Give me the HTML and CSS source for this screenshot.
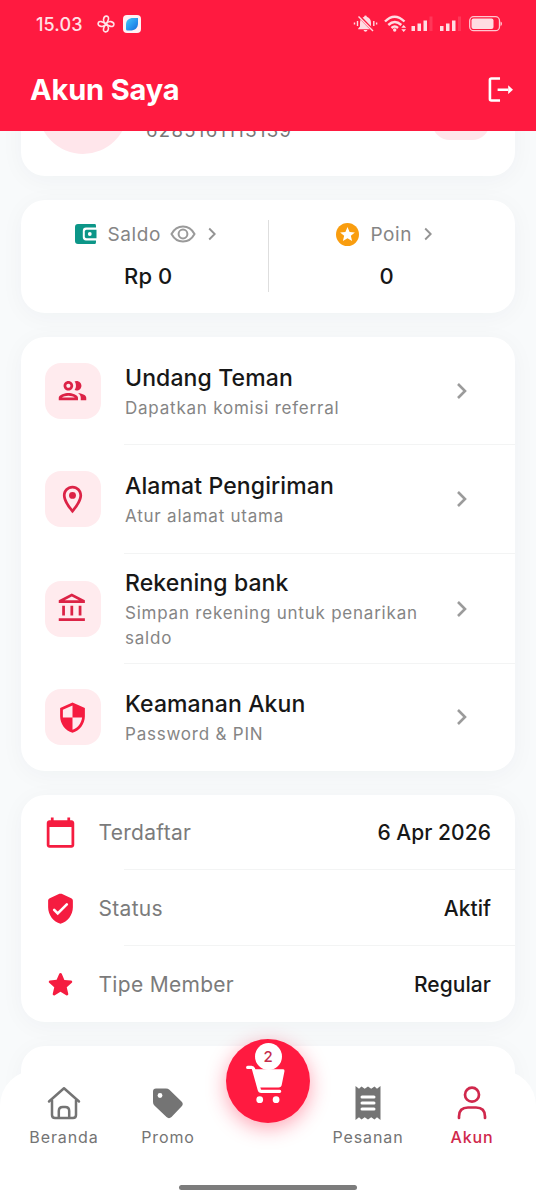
FILE: index.html
```html
<!DOCTYPE html>
<html lang="id">
<head>
<meta charset="utf-8">
<title>Akun Saya</title>
<link rel="stylesheet" href="styles.css">
</head>
<body>
<div class="screen">
  <header class="header">
    <div class="status">
      <span class="clock">15.03</span>
      <svg class="pinwheel" width="18" height="18" viewBox="0 0 18 18"><g fill="none" stroke="#ffe3e8" stroke-width="1.6" transform="rotate(12 9 9)"><path id="petal" d="M9 9C4.500 7.500 4.800 1.500 8 1.200C11.500 1 10.500 6 9 9Z"/><use href="#petal" transform="rotate(90 9 9)"/><use href="#petal" transform="rotate(180 9 9)"/><use href="#petal" transform="rotate(270 9 9)"/></g></svg>
      <svg class="app" width="18" height="18" viewBox="0 0 18 18"><defs><linearGradient id="leaf" x1="0" y1="0" x2="1" y2="1"><stop offset="0" stop-color="#45c8f8"/><stop offset=".5" stop-color="#2a9af0"/><stop offset="1" stop-color="#1769d8"/></linearGradient></defs><rect width="18" height="18" rx="4" fill="#fff1f4"/><path d="M3 10C3 5 6 3 10 3h5v5c0 5-3 7.500-8 7.500H4.500Q3 15.500 3 14Z" fill="url(#leaf)"/></svg>
      <svg class="indicators" width="150" height="20" viewBox="352 14 150 20">
        <g fill="#ffdce2">
          <path d="M365.500 15.500a1.300 1.300 0 0 1 1.300 1.300q4.200 1.300 4.200 6.200v3.500l1.800 2v.8h-14.600v-.8l1.800-2V23q0-4.900 4.200-6.200a1.300 1.300 0 0 1 1.300-1.300ZM363.500 30h4q-.5 1.700-2 1.700t-2-1.700Z"/>
          <path d="m359 16 14.500 15" stroke="#ff1a40" stroke-width="3"/><path d="m358.500 16.500 14.500 14.500" stroke="#ffdce2" stroke-width="1.400"/>
          <path d="M357.500 21v5M354.500 22.500v2M373.800 21v5M376.600 22.500v2" stroke="#ffdce2" stroke-width="1.400"/>
        </g>
        <g fill="none" stroke="#ffdce2" stroke-width="2.400"><path d="M385 21.500q9.500-9.500 19.500 0M388.300 25q6.500-6 13 0M391.500 28q3.300-3 6.500 0"/></g>
        <circle cx="394.700" cy="30" r="1.700" fill="#ffdce2"/><path d="m403.700 25 2.400 2.700h-4.800ZM403.700 32l2.400-2.700h-4.800Z" fill="#ffdce2"/>
        <g fill="#ffdce2"><path d="M411.500 26h3.500v5h-3.500ZM417.500 23.500h3.500V31h-3.500ZM423.500 20.500h3.500V31h-3.500ZM440 26h3.500v5H440ZM446 23.500h3.500V31H446ZM452 20.500h3.500V31H452Z"/><path d="M429.500 16.500h3V31h-3ZM458 16.500h3V31h-3Z" opacity=".15"/></g>
        <rect x="469.700" y="16.700" width="29.800" height="14" rx="4" fill="none" stroke="#ffc7d0" stroke-width="1.300"/><rect x="471.500" y="18.500" width="22" height="10.500" rx="2" fill="#ffdce2"/><path d="M500.500 21.500q1.500.3 1.500 2.200t-1.500 2.200Z" fill="#ffc7d0"/>
      </svg>
    </div>
    <div class="titlebar">
      <h1>Akun Saya</h1>
      <svg width="25" height="25" viewBox="0 0 26 26"><path d="M12.500 1.500h-9q-1.500 0-1.500 1.500v20q0 1.500 1.500 1.500h9M10 13.200h11" fill="none" stroke="#fff" stroke-width="2.700"/><path d="m21 8.600 5 4.600-5 4.600Z" fill="#fff"/></svg>
    </div>
  </header>

  <main class="content">
    <section class="card profile">
      <div class="avatar"></div>
      <div class="phone">6285161113139</div>
      <div class="edit"></div>
    </section>

    <section class="card balance">
      <div class="bal saldo">
        <div class="bal-head">
          <svg width="22" height="20" viewBox="0 0 22 20"><path d="M3 0h17q1 0 1 2v1.600H11Q7.800 3.600 7.800 7v6q0 3.400 3.200 3.400h10v1.600q0 2-1 2H3q-3 0-3-3V3Q0 0 3 0Z" fill="#0c9688"/><path d="M11.500 5.800H21.500v8.400H11.500q-1.700 0-1.700-1.700v-5q0-1.700 1.700-1.700Z" fill="#0c9688"/><circle cx="14.800" cy="10" r="1.900" fill="#fff"/></svg>
          <span>Saldo</span>
          <svg class="eye" width="26" height="18" viewBox="0 0 26 18"><g fill="none" stroke="#9a9a9a" stroke-width="2"><path d="M1.500 9Q5.500 1.500 13 1.500T24.500 9Q20.500 16.500 13 16.500T1.500 9Z"/><circle cx="13" cy="9" r="4.400"/></g></svg>
          <svg class="chev" width="8" height="14" viewBox="0 0 8 14"><path d="m1.200 1.500 5.500 5.500-5.500 5.500" fill="none" stroke="#949494" stroke-width="1.900"/></svg>
        </div>
        <div class="amount">Rp 0</div>
      </div>
      <div class="bal-divider"></div>
      <div class="bal poin">
        <div class="bal-head">
          <svg width="23" height="23" viewBox="0 0 24 24"><circle cx="12" cy="12" r="12" fill="#f99d0f"/><path d="m12 4.300 2.200 5 5.500.5-4.200 3.600 1.300 5.400-4.800-2.900-4.800 2.900 1.300-5.400-4.200-3.600 5.500-.5Z" fill="#fff"/></svg>
          <span>Poin</span>
          <svg class="chev" width="8" height="14" viewBox="0 0 8 14"><path d="m1.200 1.500 5.500 5.500-5.500 5.500" fill="none" stroke="#949494" stroke-width="1.900"/></svg>
        </div>
        <div class="amount">0</div>
      </div>
    </section>

    <section class="card menu">
      <div class="item">
        <div class="tile"><svg viewBox="0 0 24 24"><path d="M9 13.750c-2.340 0-7 1.170-7 3.500V19h14v-1.750c0-2.330-4.660-3.500-7-3.500zM4.340 17c.84-.58 2.870-1.250 4.660-1.250s3.820.67 4.660 1.250H4.340zM9 12c1.930 0 3.500-1.570 3.500-3.500S10.930 5 9 5 5.500 6.570 5.500 8.500 7.070 12 9 12zm0-5c.83 0 1.500.67 1.500 1.500S9.830 10 9 10s-1.500-.67-1.500-1.500S8.170 7 9 7zm7.040 6.810c1.160.84 1.960 1.960 1.960 3.440V19h4v-1.750c0-2.020-3.500-3.170-5.960-3.440zM15 12c1.930 0 3.500-1.570 3.500-3.500S16.930 5 15 5c-.54 0-1.040.13-1.500.35.63.89 1 1.980 1 3.150s-.37 2.260-1 3.150c.46.22.96.35 1.500.35z"/></svg></div>
        <div class="text"><h2>Undang Teman</h2><p>Dapatkan komisi referral</p></div>
        <svg class="go" viewBox="0 0 12 18"><path d="m2 2 7 7-7 7"/></svg>
      </div>
      <div class="item">
        <div class="tile"><svg viewBox="0 0 24 24"><path d="M12 2C8.130 2 5 5.130 5 9c0 5.250 7 13 7 13s7-7.750 7-13c0-3.870-3.130-7-7-7zM7 9c0-2.760 2.240-5 5-5s5 2.240 5 5c0 2.880-2.880 7.190-5 9.880C9.920 16.210 7 11.850 7 9z"/><circle cx="12" cy="9" r="2.500"/></svg></div>
        <div class="text"><h2>Alamat Pengiriman</h2><p>Atur alamat utama</p></div>
        <svg class="go" viewBox="0 0 12 18"><path d="m2 2 7 7-7 7"/></svg>
      </div>
      <div class="item tall">
        <div class="tile"><svg viewBox="0 0 24 24"><path d="M6.500 10h-2v7h2v-7zm6 0h-2v7h2v-7zm8.500 9H2v2h19v-2zm-2.500-9h-2v7h2v-7zm-7-6.740L16.710 6H6.290l5.210-2.740m0-2.260L2 6v2h19V6l-9.500-5z"/></svg></div>
        <div class="text"><h2>Rekening bank</h2><p>Simpan rekening untuk penarikan saldo</p></div>
        <svg class="go" viewBox="0 0 12 18"><path d="m2 2 7 7-7 7"/></svg>
      </div>
      <div class="item">
        <div class="tile bright"><svg viewBox="0 0 24 24"><path fill-rule="evenodd" d="M12 1 3 5v6c0 5.550 3.840 10.740 9 12 5.160-1.260 9-6.450 9-12V5ZM12 3.190V12H5V6.300ZM12 12h7c-.53 4.120-3.280 7.790-7 8.930Z"/></svg></div>
        <div class="text"><h2>Keamanan Akun</h2><p>Password &amp; PIN</p></div>
        <svg class="go" viewBox="0 0 12 18"><path d="m2 2 7 7-7 7"/></svg>
      </div>
    </section>

    <section class="card info">
      <div class="row"><svg width="33" height="33" viewBox="0 0 24 24"><path d="M20 3h-1V1h-2v2H7V1H5v2H4c-1.100 0-2 .9-2 2v16c0 1.100.9 2 2 2h16c1.100 0 2-.9 2-2V5c0-1.100-.9-2-2-2zm0 18H4V8h16v13z"/></svg><span>Terdaftar</span><b>6 Apr 2026</b></div>
      <div class="row"><svg width="33" height="33" viewBox="0 0 24 24"><path d="M11.190 1.360l-7 3.110C3.470 4.790 3 5.510 3 6.300V11c0 5.550 3.840 10.740 9 12 5.160-1.260 9-6.450 9-12V6.300c0-.79-.47-1.510-1.190-1.830l-7-3.110c-.51-.23-1.110-.23-1.620 0z"/><path d="m7.400 13 2.600 2.600 6.600-6.600" fill="none" stroke="#fff" stroke-width="1.900" stroke-linecap="round"/></svg><span>Status</span><b>Aktif</b></div>
      <div class="row"><svg width="33" height="33" viewBox="0 0 24 24"><path d="M12 17.270l4.150 2.510c.76.46 1.690-.22 1.490-1.080l-1.100-4.720 3.670-3.180c.67-.58.31-1.680-.57-1.750l-4.830-.41-1.890-4.460c-.34-.81-1.500-.81-1.840 0L9.190 8.630l-4.830.41c-.88.070-1.240 1.170-.57 1.750l3.670 3.180-1.100 4.720c-.2.86.73 1.540 1.490 1.080l4.150-2.500z"/></svg><span>Tipe Member</span><b>Regular</b></div>
    </section>

    <section class="card next"></section>
  </main>

  <nav class="nav">
    <div class="tab"><svg width="34" height="34" viewBox="0 0 34 34"><g fill="none" stroke="#747474" stroke-width="2.500" stroke-linejoin="round" stroke-linecap="round"><path d="M2 15.500 17 2.300l15 13.200"/><path d="M5 14.500V29q0 3 3 3h18q3 0 3-3V14.500"/><path d="M11.800 31.500V25q0-4 4-4h2.400q4 0 4 4v6.500"/></g></svg><span>Beranda</span></div>
    <div class="tab"><svg width="34" height="34" viewBox="0 0 34 34"><path fill="#747474" d="M5 2.500h10q2 0 3.400 1.300L30.500 15.500q2.500 2.500 0 5L20.500 31q-2.500 2.300-5 0L3.400 19.500Q2 18 2 16V5.500q0-3 3-3Z"/><circle cx="9" cy="9.500" r="2.400" fill="#fff"/></svg><span>Promo</span></div>
    <div class="gap"></div>
    <div class="tab"><svg width="34" height="34" viewBox="0 0 34 34"><path fill="#747474" d="M4.500 0 8 2.800 10.500.5l3.200 2.300L17 .5l3.200 2.300L23.500.5 26 2.800 29.500 0v34L26 31.200l-2.500 2.300-3.300-2.300-3.200 2.300-3.300-2.300-3.200 2.300L8 31.200 4.500 34Z"/><path d="M11 11h12M11 17h12M11 23h12" stroke="#fff" stroke-width="3" stroke-linecap="round"/></svg><span>Pesanan</span></div>
    <div class="tab active"><svg width="34" height="34" viewBox="0 0 34 34"><g fill="none" stroke="#d0284c" stroke-width="2.700" stroke-linecap="round"><circle cx="17" cy="8.700" r="7"/><path d="M4 32v-1.500q0-9 9-9h8q9 0 9 9V32"/></g></svg><span>Akun</span></div>
    <div class="home-bar"></div>
    <div class="fab">
      <svg width="39" height="38.500" viewBox="0 0 40 40"><path d="M1.500 2.500h4q1.500 0 2 1.500l6 21.500q.4 1.800 2.200 1.800h19" fill="none" stroke="#fff" stroke-width="3.400" stroke-linecap="round" stroke-linejoin="round"/><path d="M7 4.500h31q2 0 1.700 2L37 20q-.5 3.300-3.500 3.300H12.500Z" fill="#fff"/><circle cx="14" cy="36" r="3.500" fill="#fff"/><circle cx="31" cy="36" r="3.500" fill="#fff"/></svg>
      <span class="badge">2</span>
    </div>
  </nav>
</div>
</body>
</html>
```
FILE: styles.css
```css
* { box-sizing: border-box; }
body { margin: 0; font-family: Inter, "Noto Sans", sans-serif; color: #171717; }
h1, h2, p { margin: 0; }
svg { display: block; flex: none; }
.screen { width: 536px; height: 1200px; display: flex; flex-direction: column; overflow: hidden; position: relative; background: #f8fafb; }

.header { height: 131px; flex: none; background: #ff1a40; color: #fff; }
.status { height: 48px; display: flex; align-items: center; padding: 0 34px 0 36px; }
.clock { font-size: 18px; font-weight: 500; letter-spacing: .1px; color: #ffe0e5; width: 61px; }
.app { margin-left: 8px; }
.indicators { margin-left: auto; }
.titlebar { height: 83px; display: flex; justify-content: space-between; align-items: center; padding: 0 23.500px 0 30px; }
.titlebar h1 { font-size: 29px; line-height: 36px; font-weight: 700; letter-spacing: -.15px; }
.titlebar svg { margin-bottom: 1px; }

.content { flex: 1; min-height: 0; overflow: hidden; padding: 0 21px; display: flex; flex-direction: column; gap: 24px; }
.card { flex: none; background: #fff; border-radius: 24px; box-shadow: 0 4px 24px rgba(30, 60, 70, .04); }

.profile { height: 136px; margin-top: -91px; display: flex; padding: 24px 25px 0 17px; }
.avatar { width: 90px; height: 90px; border-radius: 50%; background: #ffe6eb; }
.phone { margin: 53px auto 0 18px; font-size: 18.500px; line-height: 26px; letter-spacing: 1.35px; color: #777; }
.edit { width: 58px; height: 58px; border-radius: 18px; background: #ffe6eb; margin-top: 18px; }

.balance { height: 112.500px; display: flex; align-items: center; }
.bal { flex: 1; height: 100%; padding-top: 20px; }
.bal-head { height: 28px; display: flex; align-items: center; justify-content: center; font-size: 19px; letter-spacing: .6px; color: #858585; }
.bal-head span { margin-left: 11px; }
.eye { margin-left: 9px; }
.chev { margin-left: 12px; }
.amount { margin-top: 13px; text-align: center; font-size: 22px; line-height: 30px; font-weight: 500; letter-spacing: .1px; }
.saldo .amount { padding-left: 8px; }
.poin .amount { padding-right: 10px; }
.poin .bal-head { padding-right: 15px; }
.saldo .bal-head { padding-left: 2px; }
.bal-divider { width: 1px; height: 72px; background: #dedede; }

.menu { height: 434.500px; }
.item { height: 108.500px; display: flex; align-items: center; padding: 0 47px 0 23.500px; background: linear-gradient(#f3f4f4, #f3f4f4) 103px 100% / 100% 1px no-repeat; }
.item.tall { height: 110px; }
.item:last-child { height: 107.500px; background: none; }
.tile { width: 56px; height: 56px; flex: none; border-radius: 16px; background: #ffebee; display: grid; place-items: center; }
.tile svg { width: 33px; height: 33px; fill: #dc2346; }
.tile.bright svg { fill: #f51c40; }
.text { flex: 1; padding: 1px 0 0 24.500px; }
.text h2 { font-size: 23px; line-height: 32px; font-weight: 500; letter-spacing: .12px; white-space: nowrap; margin-bottom: 2px; }
.text p { font-size: 17px; line-height: 25px; letter-spacing: .78px; color: #858585; width: 305px; }
.go { width: 12px; height: 18px; fill: none; stroke: #9b9b9b; stroke-width: 2.600; }

.info { height: 226.500px; }
.row { height: 76px; display: flex; align-items: center; padding: 0 24px 0 23px; background: linear-gradient(#f3f4f4, #f3f4f4) 103px 100% / 100% 1px no-repeat; font-size: 21px; }
.row:first-child { height: 75px; }
.row:last-child { background: none; }
.row svg { fill: #f51c40; }
.row span { flex: 1; padding-left: 21.500px; letter-spacing: .3px; color: #7b7b7b; }
.row b { font-weight: 500; letter-spacing: .05px; }
.next { height: 200px; }

.nav { position: absolute; left: 0; right: 0; bottom: 0; height: 130px; background: #fff; border-radius: 36px 36px 0 0; display: flex; padding: 16px 12px 0; }
.tab { width: 104px; display: flex; flex-direction: column; align-items: center; font-size: 16px; line-height: 22px; letter-spacing: .9px; color: #747474; gap: 6px; }
.tab.active { color: #d0284c; font-weight: 500; }
.gap { width: 96px; }
.home-bar { position: absolute; left: 179px; bottom: 10px; width: 178px; height: 5px; border-radius: 3px; background: #7c7c7c; }
.fab { position: absolute; left: 226px; top: -31px; width: 84px; height: 84px; border-radius: 50%; background: #ff1a40; box-shadow: 0 5px 20px rgba(255, 26, 64, .4); padding: 26px 0 0 20px; }
.badge { position: absolute; left: 28.500px; top: 3.500px; width: 27px; height: 27px; border-radius: 50%; background: #fff; color: #c52c4b; font-size: 15px; font-weight: 500; line-height: 27px; text-align: center; }
```
